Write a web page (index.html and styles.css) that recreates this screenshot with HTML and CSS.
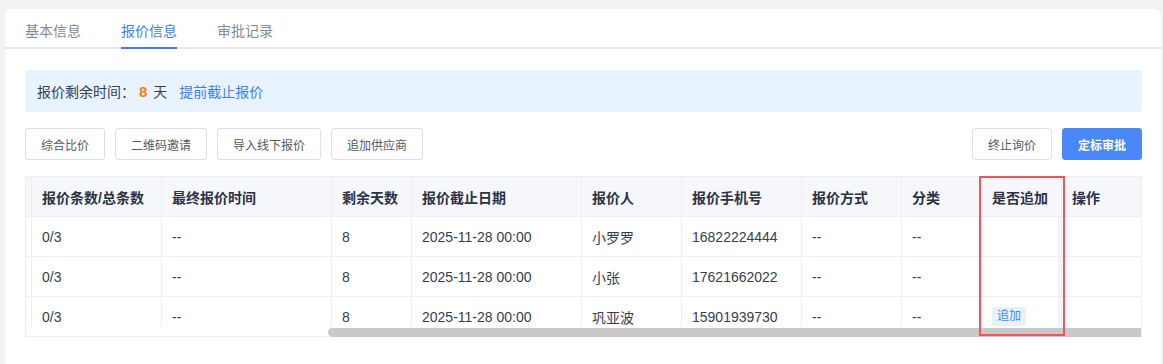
FILE: index.html
```html
<!DOCTYPE html>
<html lang="zh-CN">
<head>
<meta charset="utf-8">
<title>报价信息</title>
<link rel="stylesheet" href="styles.css">
</head>
<body>
<div class="card">
  <div class="tabs">
    <div class="tab">基本信息</div>
    <div class="tab active">报价信息</div>
    <div class="tab">审批记录</div>
  </div>
  <div class="content">
    <div class="alert">
      <span class="label">报价剩余时间：</span>
      <span class="days">8</span>
      <span class="unit">天</span>
      <a class="link">提前截止报价</a>
    </div>
    <div class="toolbar">
      <div class="btn-group">
        <button class="btn">综合比价</button>
        <button class="btn">二维码邀请</button>
        <button class="btn">导入线下报价</button>
        <button class="btn">追加供应商</button>
      </div>
      <div class="btn-group">
        <button class="btn">终止询价</button>
        <button class="btn primary">定标审批</button>
      </div>
    </div>
    <div class="table-wrap">
      <div class="viewport">
        <div class="row head">
          <div class="cell"></div>
          <div class="cell">报价条数/总条数</div>
          <div class="cell">最终报价时间</div>
          <div class="cell">剩余天数</div>
          <div class="cell">报价截止日期</div>
          <div class="cell">报价人</div>
          <div class="cell">报价手机号</div>
          <div class="cell">报价方式</div>
          <div class="cell">分类</div>
          <div class="cell">是否追加</div>
          <div class="cell last">操作</div>
        </div>
        <div class="row">
          <div class="cell"></div>
          <div class="cell">0/3</div>
          <div class="cell">--</div>
          <div class="cell">8</div>
          <div class="cell">2025-11-28 00:00</div>
          <div class="cell">小罗罗</div>
          <div class="cell">16822224444</div>
          <div class="cell">--</div>
          <div class="cell">--</div>
          <div class="cell fixed"></div>
          <div class="cell last"></div>
        </div>
        <div class="row">
          <div class="cell"></div>
          <div class="cell">0/3</div>
          <div class="cell">--</div>
          <div class="cell">8</div>
          <div class="cell">2025-11-28 00:00</div>
          <div class="cell">小张</div>
          <div class="cell">17621662022</div>
          <div class="cell">--</div>
          <div class="cell">--</div>
          <div class="cell fixed"></div>
          <div class="cell last"></div>
        </div>
        <div class="row">
          <div class="cell"></div>
          <div class="cell">0/3</div>
          <div class="cell">--</div>
          <div class="cell">8</div>
          <div class="cell">2025-11-28 00:00</div>
          <div class="cell">巩亚波</div>
          <div class="cell">15901939730</div>
          <div class="cell">--</div>
          <div class="cell">--</div>
          <div class="cell fixed"><span class="tag">追加</span></div>
          <div class="cell last"></div>
        </div>
      </div>
      <div class="track"><div class="thumb"></div></div>
      <div class="highlight"></div>
    </div>
  </div>
</div>
</body>
</html>
```
FILE: styles.css
```css
* { box-sizing: border-box; }
html, body { margin: 0; padding: 0; }
body {
  background: #f2f3f5;
  font-family: "Liberation Sans", "Noto Sans CJK SC", sans-serif;
  color: #363d50;
  height: 364px;
  overflow: hidden;
}
.card {
  margin: 9px 2px 0 5px;
  background: #fff;
  border-radius: 6px 6px 0 0;
  height: 355px;
}
.tabs {
  display: flex;
  gap: 40px;
  padding: 0 20px;
  height: 40px;
  border-bottom: 2px solid #e6e8ef;
}
.tab {
  height: 40px;
  padding-top: 3px;
  margin-bottom: -2px;
  display: flex;
  align-items: center;
  font-size: 14px;
  color: #858a94;
  border-bottom: 2px solid transparent;
}
.tab.active {
  color: #3d7ef5;
  border-bottom-color: #3d7ef5;
}
.content {
  padding: 21px 19px 0 20px;
}
.alert {
  height: 42px;
  background: #e8f3ff;
  border-radius: 3px;
  padding-left: 12px;
  display: flex;
  align-items: center;
  font-size: 14px;
  color: #363d50;
}
.alert .days {
  color: #ff7d00;
  font-weight: 700;
  font-size: 15px;
  margin-left: 4px;
}
.alert .unit { margin-left: 6px; }
.alert .link { color: #3d7ef5; margin-left: 12px; cursor: pointer; }
.toolbar {
  margin-top: 16px;
  display: flex;
  justify-content: space-between;
}
.btn-group { display: flex; gap: 10px; }
.btn {
  height: 32px;
  padding: 0 15px;
  border: 1px solid #dcdfe6;
  border-radius: 3px;
  background: #fff;
  font-family: inherit;
  font-size: 12px;
  color: #555a66;
}
.btn.primary {
  background: #4a88f7;
  border-color: #4a88f7;
  color: #fff;
  font-weight: 700;
}
.table-wrap {
  position: relative;
  margin-top: 16px;
  border: 1px solid #ebeef5;
}
.viewport {
  height: 150px;
  overflow: hidden;
}
.row {
  display: grid;
  grid-template-columns: 6px 130px 170px 80px 170px 100px 120px 100px 80px 80px 1fr;
  height: 40px;
  border-bottom: 1px solid #ebeef5;
  font-size: 14px;
}
.row.head {
  background: #f5f7fa;
  font-weight: 700;
  color: #2b3348;
}
.cell {
  border-right: 1px solid #ebeef5;
  padding-left: 10px;
  display: flex;
  align-items: center;
  white-space: nowrap;
  overflow: hidden;
}
.cell:first-child { padding-left: 0; }
.cell.last { border-right: none; }
.cell.fixed { box-shadow: inset -3px 0 0 #f2f3f6; }
.tag {
  display: inline-block;
  height: 19px;
  line-height: 19px;
  padding: 0 5px;
  background: #e8f0fe;
  color: #4a86f5;
  font-size: 12px;
  font-weight: 400;
  border-radius: 2px;
}
.track {
  height: 9px;
  position: relative;
}
.thumb {
  position: absolute;
  left: 302px;
  right: 0;
  top: 1px;
  height: 9px;
  background: #c9c9c9;
  border-radius: 5px 0 0 5px;
}
.highlight {
  position: absolute;
  left: 953px;
  top: -1px;
  width: 86px;
  height: 160px;
  border: 2px solid #f5525a;
  pointer-events: none;
}
```
